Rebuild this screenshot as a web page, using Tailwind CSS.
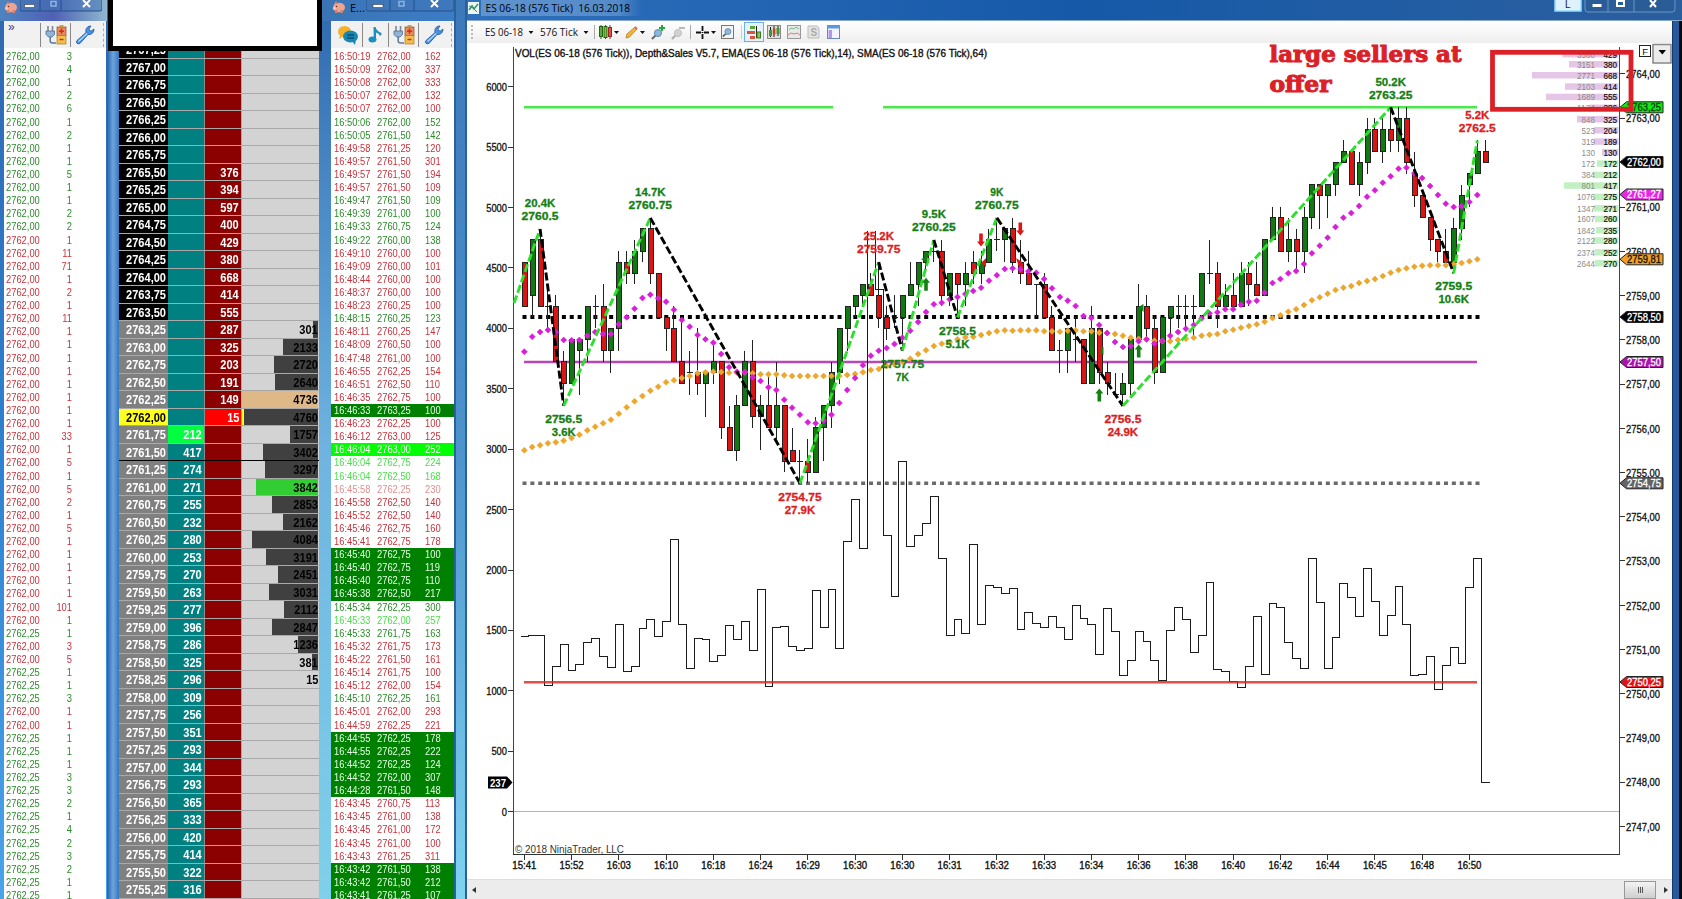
<!DOCTYPE html>
<html lang="en">
<head>
  <meta charset="UTF-8">
  <meta name="viewport" content="width=device-width, initial-scale=1.0">
  <title>ES 06-18 (576 Tick)</title>
  <script src="https://cdn.jsdelivr.net/npm/@tailwindcss/browser@4"></script>
</head>
<body class="w-[1682px] h-[899px] overflow-hidden flex bg-[#2a66ae] font-['Liberation_Sans',Arial,sans-serif]">

  <svg class="hidden">
    <symbol id="pig" viewBox="0 0 14 14">
      <ellipse cx="7" cy="7.5" rx="6" ry="4.8" fill="#f0a490"/>
      <path d="M2 4l2-3 2 3zM3 10h2.500v3H3zM8.500 10h2.500v3H8.500z" fill="#d9826c"/>
      <circle cx="4.500" cy="6.500" r=".7" fill="#5a2a20"/>
      <ellipse cx="2.500" cy="8.500" rx="1.600" ry="1.400" fill="#f8c4b6"/>
    </symbol>
    <symbol id="plug" viewBox="0 0 22 20">
      <path d="M3 1v5M7.500 1v5" stroke="#7b8794" stroke-width="1.600"/>
      <path d="M1 6h8.500v3.500L7 12H3.500L1 9.500z" fill="#8fb4d8" stroke="#4b6c8e" stroke-width=".8"/>
      <path d="M5.200 12v4q0 2 2.500 2H11" fill="none" stroke="#5d7894" stroke-width="1.500"/>
      <rect x="12" y="2" width="9" height="8.500" fill="#e98a5a" stroke="#8f4a28" stroke-width=".7"/>
      <rect x="14.500" y="0" width="4" height="2" fill="#c9a04a"/>
      <rect x="12" y="10.500" width="9" height="8.500" fill="#f3bf4c" stroke="#a87a22" stroke-width=".7"/>
      <path d="M14 6.200h5M16.500 3.700v5" stroke="#d42a1c" stroke-width="1.500"/>
      <path d="M14.500 14.500h4" stroke="#c8321c" stroke-width="1.500"/>
    </symbol>
    <symbol id="wrench" viewBox="0 0 20 20">
      <path d="M2 15.500L11 7.500Q10 3 14 1.200L16 1l-2.200 3.200L16 6.300 19 4Q19 9 14 9.600l-1-.1L5 18.400Q3 19.500 1.700 18 .8 16.800 2 15.500z" fill="#4a90e0" stroke="#2560a8" stroke-width=".9"/>
      <path d="M3.500 16.500L12 8.500" stroke="#b4d6fa" stroke-width="1.200"/>
    </symbol>
    <symbol id="arrow" viewBox="0 0 5 3"><path d="M0 0h5L2.500 3z" fill="#111"/></symbol>
    <symbol id="lens" viewBox="0 0 14 14">
      <path d="M1 13l4-4" stroke="#666" stroke-width="2.200"/>
      <circle cx="7.500" cy="6.500" r="3.800" fill="#8db8dc" stroke="#5b86ad"/>
    </symbol>
  </svg>

  <!-- ticks window -->
  <section class="w-[107px] flex flex-col shrink-0 bg-gradient-to-b from-[#2f69b0] via-[#2f80d0] to-[#4aa4ea]">
    <div class="h-[21px] shrink-0 flex items-start pl-1 bg-gradient-to-r from-[#4d84c0] via-[#5060b4] to-[#8fb7cf]">
      <svg class="w-[14px] h-[14px]"><use href="#pig"/></svg>
      <svg class="ml-[2px] w-[82px] h-[12px]" viewBox="0 0 82 12">
        <path d="M0 0v9q0 2 2 2h78q2 0 2-2V0M20 0v11M41 0v11" fill="#3f74b4" fill-opacity=".5" stroke="#25508a" stroke-width="1"/>
        <rect x="4.500" y="4.500" width="10" height="3" fill="#fff" stroke="#345"  stroke-width=".6"/>
        <rect x="31" y="1.500" width="5" height="4.500" fill="none" stroke="#8fb4e0" stroke-width="1.500"/>
        <path d="M63 0l7 7M70 0l-7 7" stroke="#fff" stroke-width="2"/>
      </svg>
    </div>
    <div class="ml-1 mr-[1px] flex-1 bg-white overflow-hidden flex flex-col">
      <div class="h-[27px] shrink-0 bg-[#f1f1f1] flex items-center">
        <span class="w-[36px] h-full pl-[4px] text-[12px] leading-3 text-[#3c3c8c]">»</span>
        <span class="w-px h-[24px] bg-[#888]"></span>
        <svg class="ml-1 w-[22px] h-5"><use href="#plug"/></svg>
        <span class="ml-[3px] w-px h-[24px] bg-[#888]"></span>
        <svg class="ml-1 w-5 h-5"><use href="#wrench"/></svg>
        <span class="ml-2 h-[24px] border-l border-dashed border-[#aaa]"></span>
      </div>
      <div id="ticks" class="pt-[2px] pl-[2px] text-[11px]"></div>
    </div>
  </section>

  <div class="w-3 shrink-0 bg-gradient-to-r from-[#1f62ae] via-[#6fa4dc] to-[#3277c2]"></div>

  <!-- price ladder -->
  <section class="relative w-[200px] shrink-0 bg-[#d3d3d3] overflow-hidden">
    <div id="ladder" class="mt-[41px] text-[13px] font-bold"></div>
  </section>

  <!-- time and sales window -->
  <section class="w-[135px] flex flex-col shrink-0 bg-gradient-to-b from-[#2f69b0] via-[#6fb4e0] to-[#7fd0ea]">
    <div class="h-[21px] shrink-0 flex items-start pl-[13px] bg-gradient-to-r from-[#3a74b4] to-[#3c7cc6]">
      <svg class="w-[14px] h-[14px]"><use href="#pig"/></svg>
      <span class="w-[20px] pl-1 text-[11px] leading-4 text-black font-['Open_Sans',sans-serif]">E...</span>
      <svg class="w-[88px] h-[12px]" viewBox="0 0 88 12">
        <path d="M0 0v9q0 2 2 2h84q2 0 2-2V0M24 0v11M48 0v11" fill="#3f74b4" fill-opacity=".5" stroke="#25508a" stroke-width="1"/>
        <rect x="7" y="4.500" width="10" height="3" fill="#fff" stroke="#345" stroke-width=".6"/>
        <rect x="33" y="1.500" width="5" height="4.500" fill="none" stroke="#8fb4e0" stroke-width="1.500"/>
        <path d="M65 0l7 7M72 0l-7 7" stroke="#fff" stroke-width="2"/>
      </svg>
    </div>
    <div class="ml-3 w-[123px] flex-1 bg-white overflow-hidden flex flex-col">
      <div class="h-[27px] shrink-0 bg-[#f1f1f1] flex items-center">
        <svg class="ml-[6px] w-[22px] h-5" viewBox="0 0 22 20">
          <ellipse cx="7.500" cy="6.500" rx="6.500" ry="5.500" fill="#f3b229"/><path d="M3 10l-1 4 5-3z" fill="#f3b229"/>
          <ellipse cx="13.500" cy="11.500" rx="7.500" ry="6" fill="#1787b5"/><path d="M15 16l3 4 1-6z" fill="#1787b5"/>
          <path d="M10 10h7M10 13h7" stroke="#10304a" stroke-width="1.200"/>
        </svg>
        <span class="ml-[3px] w-px h-[24px] bg-[#888]"></span>
        <svg class="ml-[5px] w-[15px] h-5" viewBox="0 0 15 20"><ellipse cx="4.500" cy="14.500" rx="4" ry="3" fill="#1b8fc0"/><path d="M5.500 2h2q1 4 6 6 .5 2-1.500 3Q11 8 8 7.500v7H5.800z" fill="#1b8fc0"/></svg>
        <span class="ml-[5px] w-px h-[24px] bg-[#888]"></span>
        <svg class="ml-1 w-[22px] h-5"><use href="#plug"/></svg>
        <span class="ml-[3px] w-px h-[24px] bg-[#888]"></span>
        <svg class="ml-[5px] w-5 h-5"><use href="#wrench"/></svg>
        <span class="ml-[7px] h-[24px] border-l border-dashed border-[#aaa]"></span>
      </div>
      <div id="sales" class="pt-[2px] text-[11px]"></div>
    </div>
  </section>

  <div class="w-[13px] shrink-0 bg-gradient-to-b from-[#3c78ba] via-[#4d93cc] to-[#7fd4f0] border-x-2 border-[#2b6098]"></div>

  <!-- chart window -->
  <section class="flex-1 min-w-0 flex flex-col">
    <div class="h-[21px] shrink-0 flex items-start bg-gradient-to-r from-[#2f70bc] via-[#1559a8] to-[#2a5f9e] border-b border-[#88a8cc]">
      <svg class="mt-[2px] ml-[1px] w-[11px] h-3" viewBox="0 0 11 12"><rect width="11" height="12" fill="#eef6f4"/><path d="M1 8l3-4 2 3 4-5" fill="none" stroke="#2f9c60" stroke-width="1.600"/><path d="M1 4l4 2 4 4" fill="none" stroke="#3b7fb8"/></svg>
      <svg class="ml-[2px] w-[170px] h-5" viewBox="481 0 170 20">
        <defs><linearGradient id="glow"><stop offset="0" stop-color="#7fabdc" stop-opacity=".6"/><stop offset=".85" stop-color="#7fabdc" stop-opacity=".5"/><stop offset="1" stop-color="#7fabdc" stop-opacity="0"/></linearGradient></defs>
        <rect x="481" y="0" width="160" height="16" fill="url(#glow)"/>
        <text x="485.500" y="12" font-size="11.500" textLength="144.500" lengthAdjust="spacingAndGlyphs" font-family="'Open Sans'" xml:space="preserve">ES 06-18 (576 Tick)  16.03.2018</text>
      </svg>
      <svg class="ml-auto mr-[6px] w-[124px] h-[13px]" viewBox="1552 0 124 13">
        <rect x="1555" y="-3" width="26" height="14" fill="#dff1fa" stroke="#8fe0ff" stroke-width="1.500"/>
        <text x="1565" y="8" font-size="10" fill="#222">L</text>
        <path d="M1585 0v9q0 3 3 3h84q3 0 3-3V0M1608 0v12M1634 0v12" fill="#2a5c98" stroke="#6d95c2"/>
        <rect x="1592.500" y="4" width="9" height="3" fill="#fff"/>
        <rect x="1617" y="1" width="7" height="5" fill="none" stroke="#fff" stroke-width="2"/>
        <path d="M1650 0l6 7M1656 0l-6 7" stroke="#fff" stroke-width="2"/>
      </svg>
    </div>
    <div class="flex-1 min-h-0 flex">
      <div class="w-[1205px] shrink-0 flex flex-col bg-white">
        <!-- toolbar -->
        <div class="h-[22px] shrink-0 flex items-center bg-gradient-to-b from-white to-[#eeeeee]">
          <span class="ml-1 w-[14px] h-[14px] border-l-2 border-dotted border-[#bbb]"></span>
          <svg class="w-[108px] h-5" viewBox="485 0 108 20">
            <g font-family="'Open Sans'" font-size="11" fill="#111">
              <text x="485" y="14" textLength="38" lengthAdjust="spacingAndGlyphs">ES 06-18</text>
              <text x="540" y="14" textLength="38" lengthAdjust="spacingAndGlyphs">576 Tick</text>
            </g>
            <use href="#arrow" x="528.500" y="9" width="5" height="3"/><use href="#arrow" x="583.500" y="9" width="5" height="3"/>
          </svg>
          <span class="ml-[1px] w-px h-[14px] bg-[#aaa]"></span>
          <svg class="ml-1 w-[13px] h-[14px]" viewBox="0 0 13 14"><path d="M2 0v14M6.500 0v14M11 0v14" stroke="#444"/><rect x=".5" y="1.500" width="3" height="10" fill="#52b030" stroke="#286018"/><rect x="5" y="1.500" width="3" height="11" fill="#7ac038" stroke="#286018"/><rect x="9.500" y="2.500" width="3" height="9" fill="#e05040" stroke="#902820"/></svg>
          <svg class="ml-[2px] w-[5px] h-[3px]"><use href="#arrow"/></svg>
          <svg class="ml-[6px] w-[13px] h-[13px]" viewBox="0 0 13 13"><path d="M1 12l1-4 8-7 2 2-7.500 8z" fill="#f2b43c" stroke="#b37a1c" stroke-width=".8"/><path d="M10 1l2 2" stroke="#d06a50" stroke-width="2"/></svg>
          <svg class="ml-[2px] w-[5px] h-[3px]"><use href="#arrow"/></svg>
          <svg class="ml-[6px] w-[14px] h-[15px]" viewBox="0 0 14 15"><use href="#lens" y="2" width="13" height="13"/><path d="M8 3h6M11 0v6" stroke="#21a838" stroke-width="2"/></svg>
          <svg class="ml-[6px] w-[14px] h-[15px] opacity-50 grayscale" viewBox="0 0 14 15"><use href="#lens" y="2" width="13" height="13"/><path d="M8 3h6" stroke="#777" stroke-width="2"/></svg>
          <span class="ml-[5px] w-px h-[14px] bg-[#aaa]"></span>
          <svg class="ml-[5px] w-[13px] h-[13px]" viewBox="0 0 13 13"><path d="M6.500 0v5M6.500 8v5M0 6.500h5M8 6.500h5M6.500 6v1" stroke="#111" stroke-width="1.800"/></svg>
          <svg class="ml-[2px] w-[5px] h-[3px]"><use href="#arrow"/></svg>
          <svg class="ml-[5px] w-[13px] h-[14px]" viewBox="0 0 13 14"><rect x=".5" y=".5" width="12" height="13" fill="#f4f4f4" stroke="#777"/><use href="#lens" x="1" y="1.500" width="11" height="11"/></svg>
          <span class="ml-[7px] w-px h-[14px] bg-[#ccc]"></span>
          <span class="ml-[2px] w-5 h-5 border border-[#6cb0e4] bg-[#e6f2fb] flex items-center justify-center">
            <svg class="w-[14px] h-[15px]" viewBox="0 0 14 15"><rect x="3" y="1" width="5" height="3" fill="#5aa838"/><rect y="6" width="8" height="3" fill="#e0523c"/><rect x="3" y="11" width="5" height="3" fill="#e0523c"/><path d="M9.500 1v12M9.500 9h4" stroke="#222"/><rect x="10" y="7" width="3.500" height="6" fill="#8cc850" stroke="#3c7820"/></svg>
          </span>
          <svg class="ml-[3px] w-[14px] h-[14px]" viewBox="0 0 14 14"><rect x=".5" y=".5" width="13" height="13" fill="#ddd" stroke="#888"/><path d="M3.500 2v10M7 1v11M11 1v10" stroke="#222"/><rect x="2" y="5" width="3" height="6" fill="#3f9a2c"/><rect x="5.800" y="3.500" width="2.600" height="6" fill="#d23c2c"/><rect x="9.500" y="3" width="3" height="6" fill="#3f9a2c"/></svg>
          <svg class="ml-[6px] w-[14px] h-[14px]" viewBox="0 0 14 14"><rect x=".5" y=".5" width="13" height="13" fill="#e8e8e8" stroke="#999"/><path d="M2 5l2-2 3 1 2-2 3 2" fill="none" stroke="#7cba90"/><path d="M1 10l3-2 3 1 3-1 3 2" fill="none" stroke="#d88078"/></svg>
          <svg class="ml-[6px] w-[13px] h-[14px]" viewBox="0 0 13 14"><path d="M1 1h9l2 2v10H1z" fill="#e4e4e4" stroke="#bbb"/><text x="3.500" y="11" font-size="10" font-weight="bold" fill="#aaa">S</text></svg>
          <svg class="ml-[7px] w-[13px] h-[14px]" viewBox="0 0 13 14"><rect x=".5" y=".5" width="12" height="13" fill="#f4f4ff" stroke="#6a88b8"/><path d="M0 2h13" stroke="#5b9ae0" stroke-width="3"/><rect x="1.500" y="5" width="3.500" height="8" fill="#b09ae8"/></svg>
        </div>
        <svg id="chart" class="w-[1205px] h-[836px] shrink-0" viewBox="467 43 1205 836"></svg>
        <!-- scrollbar -->
        <div class="h-5 shrink-0 bg-[#ececec] border-t border-[#ddd] flex items-center pl-[5px] pr-1">
          <svg class="w-1 h-[6px]" viewBox="0 0 4 6"><path d="M4 0v6L0 3z" fill="#333"/></svg>
          <span class="ml-auto w-8 h-[18px] border border-[#999] bg-gradient-to-b from-[#f4f4f4] to-[#cfcfcf] flex items-center justify-center gap-[1px]">
            <i class="w-px h-[6px] bg-[#555]"></i><i class="w-px h-[6px] bg-[#555]"></i><i class="w-px h-[6px] bg-[#555]"></i>
          </span>
          <svg class="ml-2 w-1 h-[6px]" viewBox="0 0 4 6"><path d="M0 0v6l4-3z" fill="#333"/></svg>
        </div>
      </div>
      <div class="w-[7px] bg-[#245a9c] border-l border-[#123a70]"></div>
      <div class="w-[3px] bg-[#05080f]"></div>
    </div>
  </section>

  <!-- white note over the ladder header -->
  <div class="absolute left-[108px] top-0 w-[214px] h-[51px] bg-white border-[5px] border-t-0 border-black"></div>

<script>
  // small ticks list: quantity, g/r
  const ticks = '3g 4g 1g 2g 6g 1g 2g 1g 1g 5g 1g 1g 2g 2g 1r 11r 71r 1r 2r 1r 11r 1r 1r 1r 1r 1r 1r 1r 1r 33r 1r 5r 1r 5r 2r 1r 5r 1r 1r 1r 1r 1r 101r 1r 1G 3r 5r 1G 1G 3G 1r 1r 1G 1G 1G 3G 3G 2G 1G 4G 2G 3G 2G 1G 1G'.split(' ');
  document.getElementById('ticks').innerHTML = ticks.map(t => {
    const kind = t.slice(-1);
    const color = kind === 'r' ? 'text-[#c8323c]' : 'text-[#2b8a2b]';
    return `<div class="h-[13.12px] leading-[13.12px] flex ${color}">
      <span class="w-[40px] origin-left scale-x-[0.85]">${kind === 'G' ? '2762,25' : '2762,00'}</span>
      <span class="w-[26px] text-right origin-right scale-x-[0.85]">${t.slice(0, -1)}</span></div>`;
  }).join('');

  // r/g plain rows, D dark green fill, L lime fill, l lime text, p pale red text
  const sales = `16:50:19 2762,00 162 r|16:50:09 2762,00 337 r|16:50:08 2762,00 333 r|16:50:07 2762,00 132 r|16:50:07 2762,00 100 r|16:50:06 2762,00 152 g|16:50:05 2761,50 142 g|16:49:58 2761,25 120 r|16:49:57 2761,50 301 r|16:49:57 2761,50 194 r|16:49:57 2761,50 109 r|16:49:47 2761,50 109 g|16:49:39 2761,00 100 g|16:49:33 2760,75 124 g|16:49:22 2760,00 138 g|16:49:10 2760,00 100 r|16:49:09 2760,00 101 r|16:48:44 2760,00 100 r|16:48:37 2760,00 100 r|16:48:23 2760,25 100 r|16:48:15 2760,25 123 g|16:48:11 2760,25 147 r|16:48:09 2760,50 100 r|16:47:48 2761,00 100 r|16:46:55 2762,25 154 r|16:46:51 2762,50 110 r|16:46:35 2762,75 100 r|16:46:33 2763,25 100 D|16:46:23 2762,25 100 r|16:46:12 2763,00 125 r|16:46:04 2763,00 252 L|16:46:04 2762,75 224 l|16:46:04 2762,50 168 l|16:45:58 2762,25 230 p|16:45:58 2762,50 140 r|16:45:52 2762,50 140 r|16:45:46 2762,75 160 r|16:45:41 2762,75 178 r|16:45:40 2762,75 100 D|16:45:40 2762,75 119 D|16:45:40 2762,75 110 D|16:45:38 2762,50 217 D|16:45:34 2762,25 300 g|16:45:33 2762,00 257 l|16:45:33 2761,75 163 g|16:45:32 2761,75 173 r|16:45:22 2761,50 161 r|16:45:14 2761,75 100 r|16:45:12 2762,00 154 r|16:45:10 2762,25 161 g|16:45:01 2762,00 293 r|16:44:59 2762,25 221 r|16:44:55 2762,25 178 D|16:44:55 2762,25 222 D|16:44:52 2762,25 124 D|16:44:52 2762,00 307 D|16:44:28 2761,50 148 D|16:43:45 2760,75 113 r|16:43:45 2761,00 138 r|16:43:45 2761,00 172 r|16:43:45 2761,00 100 r|16:43:43 2761,25 311 r|16:43:42 2761,50 138 D|16:43:42 2761,50 212 D|16:43:41 2761,25 107 D`.split('|');
  const saleStyle = {
    r: 'text-[#c8323c]', g: 'text-[#2b8a2b]', D: 'bg-[#008000] text-[#e4ffe4]',
    L: 'bg-[#00ff00] text-white', l: 'text-[#4be04b]', p: 'text-[#e0908f]'
  };
  document.getElementById('sales').innerHTML = sales.map(s => {
    const [time, price, qty, kind] = s.split(' ');
    return `<div class="h-[13.12px] leading-[13.12px] pl-[3px] flex ${saleStyle[kind]}">
      <span class="w-[43px] origin-left scale-x-[0.85]">${time}</span>
      <span class="w-[48px] origin-left scale-x-[0.85]">${price}</span>
      <span class="origin-left scale-x-[0.85]">${qty}</span></div>`;
  }).join('');

  // ladder rows from 2767,25 down: bid, ask, volume
  const asks = [0,0,0,0,0,0,0,376,394,597,400,429,380,668,414,555,287,325,203,191,149,15];
  const bids = [212,417,274,271,255,232,280,253,270,263,277,396,286,325,296,309,256,351,293,344,293,365,333,420,414,322,316];
  const vols = [301,2133,2720,2640,4736,4760,1757,3402,3297,3842,2853,2162,4084,3191,2451,3031,2112,2847,1236,381,15];
  let ladder = '';
  for (let i = 0; i < 49; i++) {
    const price = (2767.25 - i * 0.25).toFixed(2).replace('.', ',');
    const ask = asks[i] || '', bid = i > 21 ? bids[i - 22] : '', vol = vols[i - 16] || '';
    const priceBg = i === 21 ? 'bg-[#ffff20] text-black' : i < 16 ? 'bg-black text-white' : 'bg-[#808080] text-white';
    const bar = vol === 4736 ? 'bg-[#deb887]' : vol === 3842 ? 'bg-[#32cd32]' : 'bg-[#404040]';
    const w = vol === 4736 ? 76 : vol === 15 ? 0 : vol * 0.0162 - (vol === 4760 ? 3.5 : 0);
    ladder += `<div class="h-[17.5px] leading-[17px] flex border-b ${i === 23 ? 'border-black' : 'border-[#a9a9a9]'}">
      <div class="w-[49px] pr-[2px] flex justify-end ${priceBg}"><span class="origin-right scale-x-[0.85]">${price}</span></div>
      <div class="w-[37px] pr-[2px] border-r border-[#8c8c8c] flex justify-end text-white ${i === 22 ? 'bg-[#00ff40]' : 'bg-[#008080]'}"><span class="origin-right scale-x-[0.85]">${bid}</span></div>
      <div class="w-[37px] pr-[2px] border-r border-[#a9a9a9] flex justify-end text-white ${i === 21 ? 'bg-[#ff0000]' : 'bg-[#8b0000]'}"><span class="origin-right scale-x-[0.85]">${ask}</span></div>
      <div class="relative w-[76px] flex justify-end text-black ${vol === 4760 ? 'bg-[#ffff20]' : 'bg-[#d3d3d3]'}">
        <div class="absolute right-0 inset-y-0 ${bar}" style="width:${w}px"></div>
        <span class="relative origin-right scale-x-[0.85]">${vol}</span>
      </div></div>`;
  }
  document.getElementById('ladder').innerHTML = ladder;

  // ---- chart ----
  const X = i => 524.3 + 7.876 * i;
  const T = t => 107.3 + 11.058 * t;          // quarter points below 2763,25
  const P = p => T((2763.25 - p) * 4);
  let svg = '';
  const line = (x1, y1, x2, y2, c, w = 1, extra = '') => { svg += `<line x1="${x1}" y1="${y1}" x2="${x2}" y2="${y2}" stroke="${c}" stroke-width="${w}" ${extra}/>`; };
  const text = (x, y, s, size, len, fill = '#111', extra = '') => { svg += `<text x="${x}" y="${y}" font-size="${size}" fill="${fill}" ${len ? `textLength="${len}" lengthAdjust="spacingAndGlyphs"` : ''} ${extra}>${s}</text>`; };

  // depth bars
  const depth = [
    [54,1562.5,3580,429],[64,1569,3151,380],[75,1532,2771,668],[86.3,1565,2103,414],[96.7,1546,1689,555],[107.5,1590,1134,286],
    [119,1577,848,325],[130,1594,523,204],[141.3,1594,319,189],[152,1602,130,130],[163.3,1597,172,172],[174.7,1594,384,212],
    [185.3,1564,801,417],[196.7,1594,1076,275],[208,1594,1347,271],[218.7,1595,1607,260],[230,1596,1842,235],[240.3,1593,2122,280],
    [252,1595,2374,252],[263,1595,2644,270]];
  depth.forEach(([y, x, sum, qty], i) => {
    svg += `<rect x="${x}" y="${y - 3}" width="${1618.500 - x}" height="6.500" fill="${i < 10 ? '#e6c6e6' : '#c2f0c2'}"/>`;
    text(1595, y + 3.6, sum, 9.6, String(sum).length * 4.5, '#8c8c8c', 'text-anchor="end"');
    text(1617, y + 3.6, qty, 9.6, 13.5, '#111', 'text-anchor="end" stroke="#111" stroke-width=".2"');
  });

  // axes
  const crisp = 'shape-rendering="crispEdges"';
  line(513.5, 47, 513.5, 854.5, '#444', 1, crisp);
  line(1619.5, 47, 1619.5, 854.5, '#444', 1, crisp);
  line(513, 854.5, 1620, 854.5, '#333', 1, crisp);
  line(514, 811.7, 1619, 811.7, '#b4b4b4', 1, crisp);
  for (let v = 0; v <= 6000; v += 500) {
    const y = 811.7 - v * 0.12083;
    line(508, y, 513, y, '#333', 1, crisp);
    text(507, y + 4, v, 10.5, String(v).length * 5.2, '#111', 'text-anchor="end" stroke="#111" stroke-width=".3"');
  }
  for (let p = 2747; p <= 2764; p++) {
    if (p === 2762) continue;
    const y = P(p) + (p > 2762 ? -0.2 : 0.3);
    line(1620, y, 1625, y, '#333', 1, crisp);
    text(1626, y + 4.300, p + ',00', 10.5, 34, '#111', 'stroke="#111" stroke-width=".3"');
  }
  '15:41 15:52 16:03 16:10 16:18 16:24 16:29 16:30 16:30 16:31 16:32 16:33 16:34 16:36 16:38 16:40 16:42 16:44 16:45 16:48 16:50'.split(' ').forEach((s, i) => {
    line(X(i * 6), 855, X(i * 6), 860, '#333', 1, crisp);
    text(X(i * 6), 869, s, 10, 24, '#111', 'text-anchor="middle" stroke="#111" stroke-width=".35"');
  });
  text(515, 57, 'VOL(ES 06-18 (576 Tick)), Depth&amp;Sales V5.7, EMA(ES 06-18 (576 Tick),14), SMA(ES 06-18 (576 Tick),64)', 10, 472, '#111', 'stroke="#111" stroke-width=".35"');
  text(515, 852.500, '© 2018 NinjaTrader, LLC', 10.5, 109, '#333');

  // levels
  line(524, 107.3, 833, 107.3, '#4be84b', 2.4);
  line(883, 107.3, 1477, 107.3, '#4be84b', 2.4);
  line(522.5, 317, 1480, 317, '#000', 4, 'stroke-dasharray="4 3.876"');
  line(524, 362, 1477, 362, '#b846b8', 2.4);
  line(522.5, 483.3, 1480, 483.3, '#6a6a6a', 3.5, 'stroke-dasharray="4 3.876"');

  // candles: colour (g, r, d = doji), high, top, bottom, low
  const candles = `r14,14,18,18 g12,12,17,19 r11,12,18,18 d16,18,18,20 r17,18,23,23 r22,23,25,27 g21,21,25,25 g21,21,22,26 g18,18,21,23 d17,18,18,20
    r16,18,22,23 g20,20,22,24 g13,14,20,22 r13,14,15,16 g12,13,15,16 g11,11,13,14 r10,11,15,16 r15,15,19,19 r19,19,20,22 r18,20,23,23
    r19,23,25,25 d22,24,24,26 r20,24,25,26 g24,24,25,28 g21,23,24,25 r23,23,29,30 r27,29,31,31 g26,27,31,32 g22,23,27,27 r21,23,28,29
    g26,27,28,31 r24,27,29,29 g23,27,29,30 r27,27,32,33 r29,31,32,32 d31,32,32,34 r30,32,33,34 g28,29,33,33 g27,27,29,32 g23,24,27,29
    g20,20,24,25 g18,18,20,22 g17,17,18,19 g16,16,17,18 r15,16,17,17 r14,17,19,20 r18,19,20,21 d17,19,19,20 g17,17,19,22 g14,16,17,17
    g14,14,16,18 g13,13,14,15 d12,13,13,14 r12,13,17,18 g15,15,17,18 r15,15,16,19 g14,15,16,18 r13,14,15,16 g13,14,15,16 g11,12,14,14
    d10,12,12,13 g11,11,12,14 r10,11,14,15 r12,14,15,16 r13,15,16,16 d16,16,16,19 r15,16,19,19 r18,19,22,22 d21,22,22,24 g20,20,22,24
    d19,21,21,23 r21,21,25,25 g18,20,25,25 r20,20,24,25 r23,24,25,26 d24,26,26,26 g24,25,26,27 g21,21,25,26 g16,18,21,21 r17,18,20,21
    r19,20,24,25 g19,19,24,24 g18,18,19,21 d17,18,18,20 d17,18,18,20 d17,18,18,21 g15,15,18,18 d12,15,15,16 r14,15,18,20 g16,17,18,18
    r15,17,18,18 g14,15,18,18 r14,15,16,18 r14,16,17,17 g12,12,17,17 g9,10,12,12 r9,10,13,13 g10,12,13,14 r11,12,13,15 g9,10,13,15
    g7,7,10,11 r7,7,8,11 g7,7,8,10 g5,5,7,8 g3,4,5,5 r4,4,7,7 g4,5,7,8 g1,2,5,6 r1,2,4,4 g1,2,4,5
    r0,2,3,4 g0,1,3,4 r0,1,5,6 r4,6,8,9 r8,8,10,10 r10,10,12,13 r12,12,13,14 r11,13,14,14 g10,11,14,15 g7,8,11,12
    g6,6,7,9 g3,4,6,6 r3,4,5,5`.split(/\s+/);
  candles.forEach((c, i) => {
    const [h, t, b, l] = c.slice(1).split(',').map(Number);
    const x = Math.floor(X(i)) + 0.5;
    line(x, T(h), x, T(l), '#222', 1, crisp);
    if (c[0] === 'd') line(x - 3, T(t), x + 3, T(t), '#222', 1, crisp);
    else svg += `<rect x="${x - 2.5}" y="${T(t)}" width="5" height="${T(b) - T(t)}" fill="${c[0] === 'g' ? '#127812' : '#dc1414'}" stroke="#222" stroke-width="1" ${crisp}/>`;
  });

  // volume steps, y below 450 in thirds
  const volume = [560,557,555,706,650,583,661,643,576,565,620,653,523,665,650,536,508,558,515,268,523,655,566,568,634,616,526,568,515,600,418,709,532,530,589,600,595,421,532,418,595,274,148,295,-660,-482,256,439,34,289,256,221,139,326,556,508,550,282,523,405,412,430,415,539,487,520,532,499,532,568,466,505,523,613,475,544,676,631,544,574,631,691,540,473,508,607,555,397,657,664,694,712,649,499,673,460,471,577,625,655,325,457,655,562,400,442,499,355,454,555,496,408,523,676,673,619,718,646,592,641,412,325,998];
  let d = '';
  volume.forEach((v, i) => {
    const y = Math.floor(450 + v / 3) + 0.5, x1 = Math.round(X(i - 0.5)) + 0.5, x2 = Math.round(X(i + 0.5)) + 0.5;
    // the top of the tallest bar stays open
    d += `${i ? 'L' : 'M'}${x1} ${y}${i === 44 ? 'M' : 'L'}${x2} ${y}`;
  });
  svg += `<path d="${d}" fill="none" stroke="#1c1c1c" stroke-width="1" ${crisp}/>`;
  line(524, 682.3, 1477, 682.3, '#e02020', 2.4, 'opacity=".8"');

  // moving averages
  const sma = [450.3,447,445.3,443.3,442.3,440.7,438,434.7,430.3,426.7,423.3,419.7,413.7,407.3,401.3,396,390.7,386.7,382.3,380.3,378,376,373.3,372.3,371.7,372,372.7,372.7,372.3,373.3,374.3,374.3,374.3,375.3,376,376,376,376,376,376,376,375,374,372.3,370,369,366,364.3,361.7,358.7,354,350.3,346,343.7,342,339.3,337.3,336.7,335,333,331.3,330.3,330.7,330.3,330.3,330.3,331.3,331.3,331.7,330.7,330.3,331.3,331.3,332.7,333,334,335.7,337.7,339,339.3,340.7,341,341.3,340,338.7,337.7,335.7,334.7,334,331.3,329.7,327.7,326,324.3,321.7,318,315.3,311.7,309.3,305,300.3,297.3,293.7,290,287.7,286,283,281,279,276,272.7,270,268.3,266.7,265.7,265.3,265.3,265.3,264.3,263,261.3,259.3];
  const ema = [351.7,336.7,332,330,332.3,340,340.3,340,335.7,332,334,334,324.3,317.3,308.7,298,294.7,298.3,301.7,309.7,320,326.7,335,339.3,342.7,354,367.3,371.7,372,377.3,381,387.3,390,399.7,407.7,414.7,422.3,423.3,420.7,414.7,403,390,378,365.3,355.7,350.7,348,344,337.7,330.7,322,312,304.3,302.7,299.3,297,294,291,287.7,280.7,275.3,269,268.3,269.3,271.3,272.7,279,288.3,297,300.7,306,316,318,325,333,342,347,346,341.3,339.3,343.7,341,335.7,332,328.7,325,318.3,313.3,312.3,309.3,309.3,304.7,301.7,300.7,292.7,283,279,273.3,271,264,253.3,245.7,237.7,227,217.7,213,206,196.7,190.3,182.7,176.3,168.7,167.7,173.3,178,186,195,203.7,207,206.3,202,195];
  const dot = (x, y, c) => { svg += `<path d="M${x} ${y - 3}l3 3-3 3-3-3z" fill="${c}" stroke="${c}" stroke-width=".6" stroke-linejoin="round"/>`; };
  sma.forEach((y, i) => dot(X(i), y, '#eca62c'));
  ema.forEach((y, i) => dot(X(i), y, '#d81ed8'));

  // swing lines
  const swings = [[-1.300,17.7],[2,11],[5,27],[16,10],[35,34],[45,14],[48,22],[52,12],[55,19],[60,10],[76,27],[110,0],[118,15],[121,3]];
  for (let i = 1; i < swings.length; i++) {
    const [a, b] = [swings[i - 1], swings[i]];
    line(X(a[0]), T(a[1]), X(b[0]), T(b[1]), i % 2 ? '#2ae02a' : '#000', 2.9, 'stroke-dasharray="8 3"');
  }

  // swing labels: bar, tick, side, colour, upper, lower
  [[2,11,-1,'g','20.4K','2760.5'],[5,27,1,'g','2756.5','3.6K'],[16,10,-1,'g','14.7K','2760.75'],[35,34,1,'r','2754.75','27.9K'],
   [45,14,-1,'r','25.2K','2759.75'],[48,22,1,'g','2757.75','7K'],[52,12,-1,'g','9.5K','2760.25'],[55,19,1,'g','2758.5','5.1K'],
   [60,10,-1,'g','9K','2760.75'],[76,27,1,'r','2756.5','24.9K'],[110,0,-1,'g','50.2K','2763.25'],[118,15,1,'g','2759.5','10.6K'],
   [121,3,-1,'r','5.2K','2762.5']].forEach(([i, t, side, c, a, b]) => {
    const y = T(t) + (side < 0 ? -25.500 : 13.500);
    const fill = c === 'g' ? '#148014' : '#dc1e1e';
    const len = s => s.replace('.', '').length * 6.5 + (s.includes('.') ? 4.500 : 0);
    const style = `text-anchor="middle" font-weight="bold" stroke="${fill}" stroke-width=".3"`;
    text(X(i), y + 3.8, a, 10.8, len(a), fill, style);
    text(X(i), y + 16.8, b, 10.8, len(b), fill, style);
  });

  // signal arrows
  [[981,240,-1],[1020.3,229,-1],[926,284.3,1],[1138.7,351,1],[1099.3,395,1]].forEach(([x, y, up]) => {
    svg += `<path transform="translate(${x} ${y}) scale(1 ${up})" d="M0-6.500L4-1.500H1.800V6.500H-1.800V-1.500H-4z" fill="${up > 0 ? '#148014' : '#e01414'}"/>`;
  });
  svg += '<path d="M986 258v9l-5-4zM1016 258l6 4-3 5z" fill="#e01414"/><path d="M1101 347h2.500v8l-3-2zM1143.500 304l-5 3 5 5zM921 259l6-2v6z" fill="#148014"/>';

  // price markers
  const tag = (y, s, fill, color) => {
    svg += `<path d="M1620 ${y}l6.500-5.500H1663v11h-36.500z" fill="${fill}" stroke="#222"/>`;
    text(1627, y + 3.800, s, 10.5, 34, color, `stroke="${color}" stroke-width=".3"`);
  };
  tag(107.3, '2763,25', '#14e614', '#0a3c0a');
  tag(162, '2762,00', '#000', '#fff');
  tag(194.500, '2761,27', '#e628e6', '#fff');
  tag(259.3, '2759,81', '#f0a028', '#111');
  tag(317, '2758,50', '#000', '#fff');
  tag(362, '2757,50', '#aa14aa', '#fff');
  tag(483.3, '2754,75', '#646464', '#fff');
  tag(682, '2750,25', '#e11414', '#fff');
  svg += '<path d="M488 776.500h19l5.500 6-5.500 6h-19z" fill="#000"/>';
  text(490, 786.500, '237', 10.8, 16, '#fff', 'font-weight="bold"');

  // panel buttons
  svg += '<rect x="1639.500" y="45.500" width="11" height="11" fill="#fff" stroke="#222"/><rect x="1653" y="44.500" width="18" height="18.500" fill="#ececec" stroke="#888" stroke-width="1.500"/><path d="M1658.500 50h7.500l-3.700 4.500z" fill="#000"/>';
  text(1642.300, 54.500, 'F', 9.500, 0, '#111');

  // annotation
  svg += '<rect x="1492.500" y="52.300" width="138.500" height="57" fill="none" stroke="#dc2028" stroke-width="4.800"/>';
  const note = `font-family="'DejaVu Serif'" font-weight="bold" stroke="#dc2028" stroke-width="1"`;
  text(1269.5, 61.5, 'large sellers at', 21.5, 192, '#dc2028', note);
  text(1269.5, 91.5, 'offer', 21.5, 62, '#dc2028', note);

  document.getElementById('chart').innerHTML = svg;
</script>
</body>
</html>
